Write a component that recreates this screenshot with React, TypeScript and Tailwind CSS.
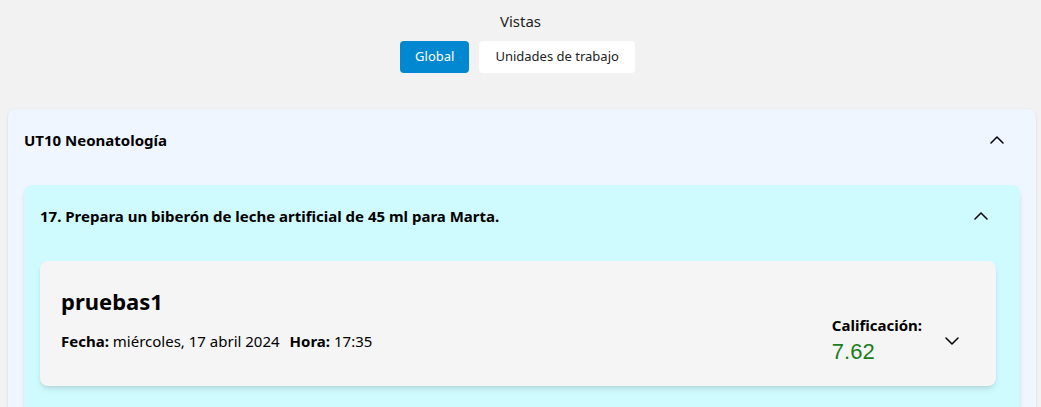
import { ChevronDown, ChevronUp } from "lucide-react";

export default function App() {
  return (
    <div className="h-screen overflow-hidden bg-[#f2f2f2] font-['Noto_Sans',sans-serif] text-black">
      {/* View switch */}
      <div className="flex flex-col items-center pt-[10px]">
        <span className="text-[15px] leading-[22px] text-[#222]">Vistas</span>
        <div className="mr-[6px] mt-[9px] flex gap-[10px]">
          <button className="h-[32px] rounded-[4px] bg-[#0288d1] px-[15px] text-[13px] text-white">
            Global
          </button>
          <button className="h-[32px] rounded-[4px] bg-white px-[16px] text-[13px] text-[#222]">
            Unidades de trabajo
          </button>
        </div>
      </div>

      {/* Unit card */}
      <div className="ml-[8px] mr-[5px] mt-[36px] rounded-t-[8px] bg-[#eff6ff] px-[16px] pb-10 shadow-sm">
        <div className="flex h-[62px] items-center justify-between pr-[11px]">
          <h2 className="text-[15px] font-bold">UT10 Neonatología</h2>
          <ChevronUp className="h-6 w-6" strokeWidth={1.5} />
        </div>

        <div className="mt-[14px] rounded-[8px] bg-[#cffafe] pb-10 pl-[16px] pr-[24px] shadow-md">
          <div className="-mr-[8px] flex h-[62px] items-center justify-between pr-[11px]">
            <h3 className="text-[15px] font-bold">
              17. Prepara un biberón de leche artificial de 45 ml para Marta.
            </h3>
            <ChevronUp className="h-6 w-6" strokeWidth={1.5} />
          </div>

          <div className="mt-[14px] flex h-[125px] justify-between rounded-[8px] bg-[#f5f5f5] px-[21px] shadow-md">
            <div className="flex flex-col pt-[25px]">
              <span className="text-[22px] font-bold leading-[30px]">pruebas1</span>
              <div className="mt-[14px] text-[15px] leading-[22px]">
                <span className="font-bold">Fecha:</span> miércoles, 17 abril 2024
                <span className="ml-[10px] font-bold">Hora:</span> 17:35
              </div>
            </div>
            <div className="flex items-center gap-[18px] self-end pb-[19px] pr-[11px]">
              <div className="flex flex-col">
                <span className="text-[15px] font-bold leading-[20px]">Calificación:</span>
                <span className="mt-[2px] font-['Liberation_Sans',sans-serif] text-[22px] leading-[30px] text-[#1b7d1b]">
                  7.62
                </span>
              </div>
              <ChevronDown className="h-6 w-6" strokeWidth={1.5} />
            </div>
          </div>
        </div>
      </div>
    </div>
  );
}
